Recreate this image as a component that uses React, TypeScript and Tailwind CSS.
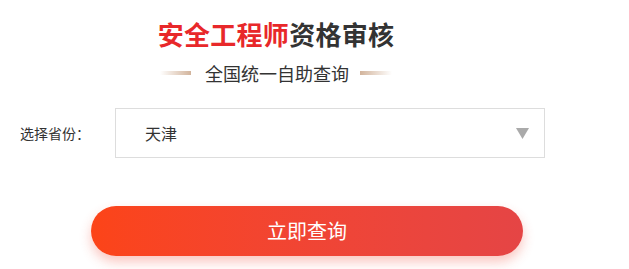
import React from "react";

export default function App() {
  const font = { fontFamily: '"Noto Sans CJK SC", "Noto Sans", sans-serif' };
  return (
    <div className="w-[629px] h-[269px] bg-white overflow-hidden" style={font}>
      <div className="ml-[160px] w-[232px] pt-[19px] flex flex-col items-center">
        <h1 className="text-[26px] leading-[30px] font-bold tracking-[0.3px] whitespace-nowrap">
          <span className="text-[#e8282a]">安全工程师</span>
          <span className="text-[#333333]">资格审核</span>
        </h1>
        <div className="mt-[13px] flex items-center w-full">
          <div className="w-[31px] h-[4px] bg-gradient-to-r from-[#ffffff] to-[#d2b49c]" />
          <span className="ml-[14px] text-[18px] leading-[22px] text-[#333333] whitespace-nowrap">全国统一自助查询</span>
          <div className="ml-auto w-[32px] h-[4px] bg-gradient-to-r from-[#d2b49c] to-[#ffffff]" />
        </div>
      </div>
      <div className="mt-[24px] flex items-center pl-[20px]">
        <span className="w-[95px] text-[14px] text-[#333333] whitespace-nowrap">选择省份：</span>
        <div className="w-[430px] h-[50px] border border-[#dddddd] flex items-center pl-[29px] pr-[15px]">
          <span className="text-[16px] text-[#333333]">天津</span>
          <svg className="ml-auto" width="13" height="11" viewBox="0 0 13 11">
            <polygon points="0,0 13,0 6.5,11" fill="#aaaaaa" />
          </svg>
        </div>
      </div>
      <button className="mt-[48px] ml-[91px] w-[432px] h-[50px] rounded-full bg-gradient-to-r from-[#fc4418] to-[#e54545] text-white text-[20px] shadow-[0_6px_12px_rgba(240,70,50,0.3)] flex items-center justify-center">
        立即查询
      </button>
    </div>
  );
}
